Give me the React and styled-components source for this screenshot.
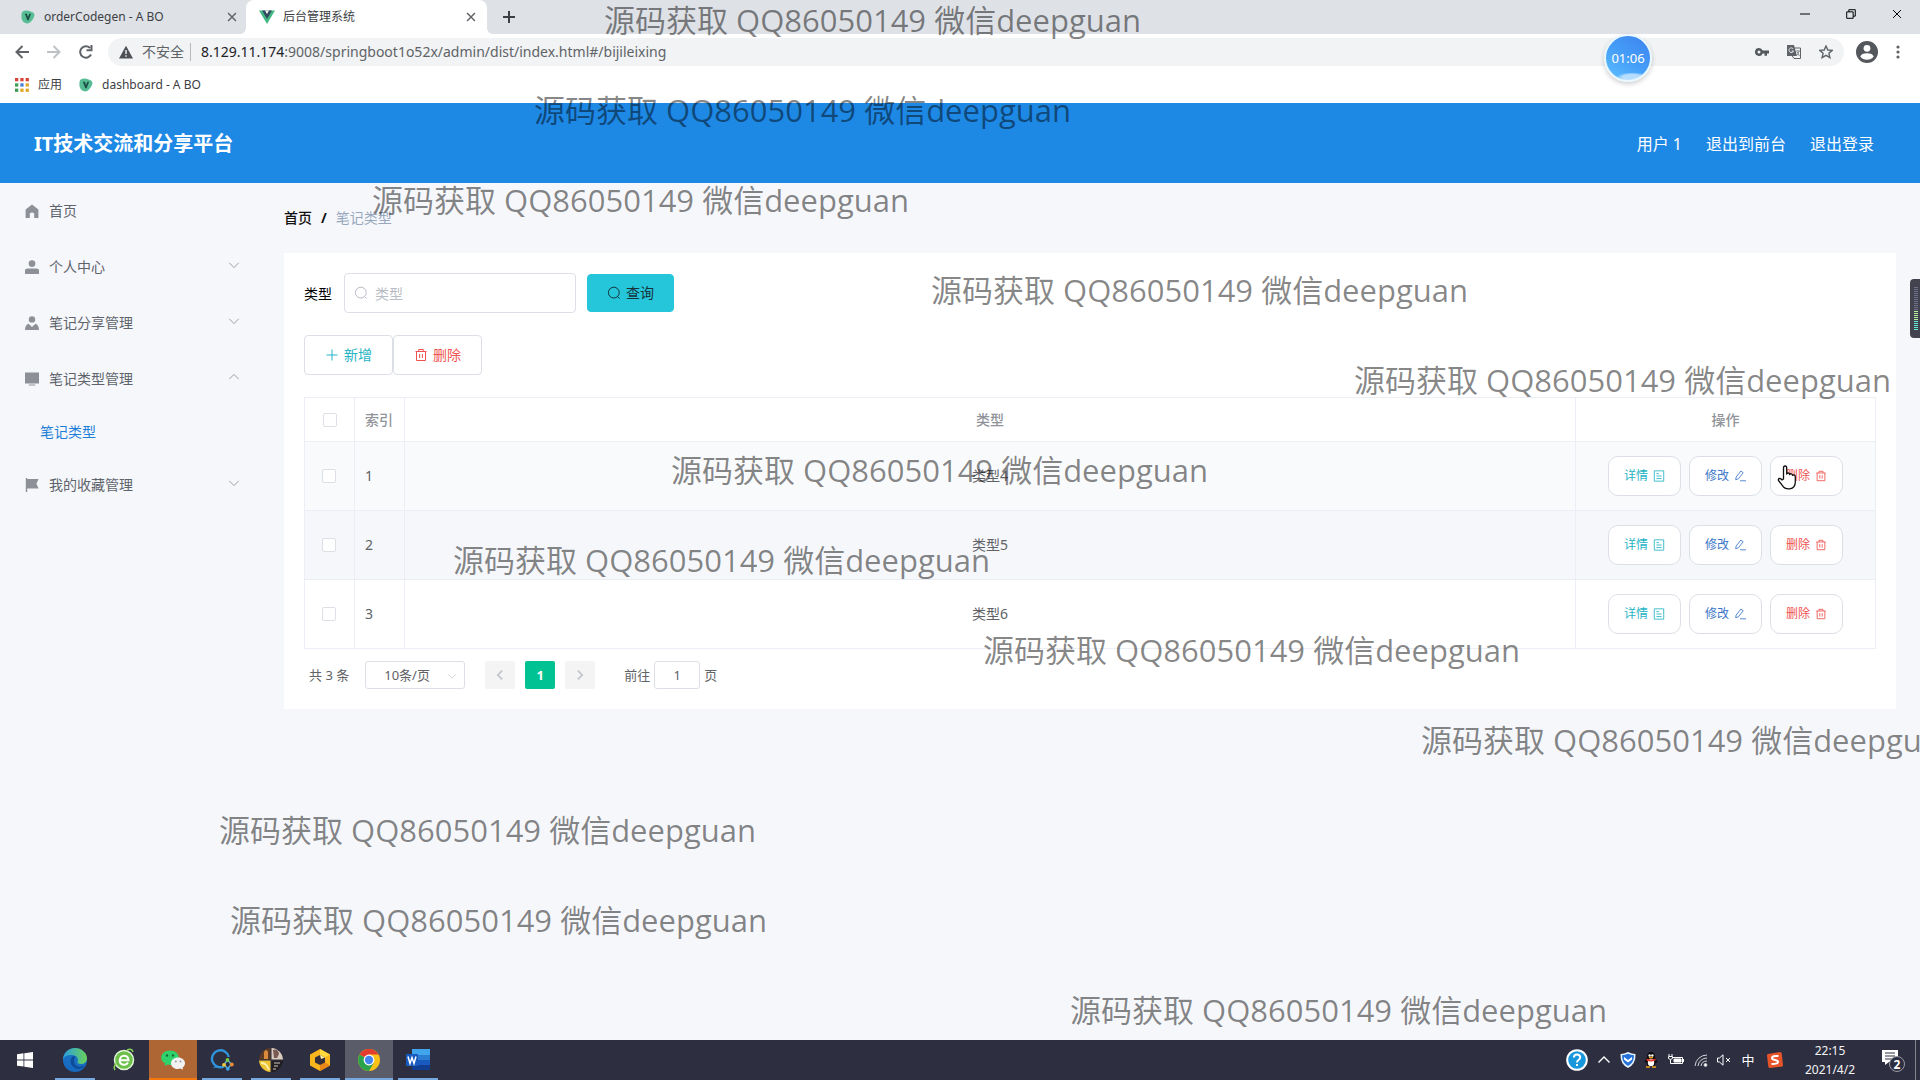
import React, { useState } from "react";
import styled, { createGlobalStyle, css } from "styled-components";

const GlobalStyle = createGlobalStyle`
  *, *::before, *::after { box-sizing: border-box; }
  body { margin: 0; overflow: hidden; }
  body, button, input, select {
    font-family: "Noto Sans", "Noto Sans CJK SC", sans-serif;
    font-size: 14px;
  }
  button { padding: 0; border: 0; background: none; color: inherit; cursor: pointer; }
  a { color: inherit; text-decoration: none; }
  svg { display: block; flex: none; }
`;

const Screen = styled.div`
  position: relative;
  display: flex;
  flex-direction: column;
  height: 100vh;
  overflow: hidden;
  background: #f6f7fb;
`;

/* ---------- browser frame ---------- */

const TabStrip = styled.div`
  display: flex;
  height: 34px;
  flex: none;
  background: #dee1e6;
  color: #3c4043;
`;

const Tab = styled.div`
  position: relative;
  display: flex;
  align-items: center;
  width: ${(p) => (p.$active ? 241 : 246)}px;
  padding: 0 ${(p) => (p.$active ? 6 : 4)}px 0 ${(p) => (p.$active ? 13 : 20)}px;
  border-radius: 8px 8px 0 0;
  background: ${(p) => (p.$active ? "#fff" : "transparent")};
  font-size: 12px;
  line-height: 20px;
  ${(p) => p.$active && css`
    &::before, &::after {
      content: "";
      position: absolute;
      bottom: 0;
      width: 6px;
      height: 6px;
    }
    &::before { right: 100%; background: radial-gradient(circle at 0 0, transparent 6px, #fff 6px); }
    &::after { left: 100%; background: radial-gradient(circle at 100% 0, transparent 6px, #fff 6px); }
  `}
`;

const TabTitle = styled.span`
  flex: 1;
  padding-left: 8px;
  white-space: nowrap;
`;

const IconButton = styled.button`
  display: grid;
  place-items: center;
  width: ${(p) => p.$w || 20}px;
  height: ${(p) => p.$h || 20}px;
  color: ${(p) => p.$color || "#5f6368"};
`;

const NewTab = styled(IconButton)`
  margin: 7px 0 0 12px;
`;

const WindowControls = styled.div`
  display: flex;
  margin-left: auto;
`;

const Toolbar = styled.div`
  display: flex;
  align-items: center;
  flex: none;
  height: 36px;
  padding: 0 2px 0 6px;
  background: #fff;
`;

const Address = styled.div`
  display: flex;
  align-items: center;
  flex: 1;
  height: 28px;
  margin: 0 12px 0 6px;
  padding: 0 8px 0 11px;
  border-radius: 14px;
  background: #f1f3f4;
  color: #5f6368;
  line-height: 20px;
`;

const Insecure = styled.span`
  padding: 0 6px 0 9px;
`;

const AddressText = styled.div`
  flex: 1;
  padding-left: 10px;
  border-left: 1px solid #b5b8bc;
  line-height: 18px;
  white-space: nowrap;
  b { font-weight: 400; color: #202124; }
`;

const AddressTools = styled.div`
  display: flex;
  gap: 12px;
`;

const Bookmarks = styled.nav`
  display: flex;
  align-items: center;
  flex: none;
  gap: 16px;
  height: 33px;
  padding: 0 14px 3px;
  background: #fff;
  color: #3c4043;
  font-size: 12px;
  line-height: 20px;
`;

const Bookmark = styled.a`
  display: flex;
  align-items: center;
  gap: 8px;
`;

/* ---------- application ---------- */

const AppHeader = styled.header`
  display: flex;
  align-items: center;
  justify-content: space-between;
  flex: none;
  height: 80px;
  padding: 2px 46px 0 34px;
  background: #1e88e5;
  color: #fff;
`;

const Brand = styled.h1`
  margin: 0;
  font-size: 20px;
  font-weight: 700;
  line-height: 30px;
`;

const UserNav = styled.nav`
  display: flex;
  gap: 24px;
  font-size: 16px;
  line-height: 24px;
`;

const Body = styled.div`
  display: flex;
  flex: 1;
  min-height: 0;
`;

const Sidebar = styled.aside`
  flex: none;
  width: 260px;
  background: #f5f7fb;
  color: #5f646c;
`;

const MenuItem = styled.button`
  display: flex;
  align-items: center;
  width: 100%;
  height: 56px;
  padding: 0 20px 0 25px;
  text-align: left;
  svg:first-child { color: #8d9096; }
`;

const MenuLabel = styled.span`
  flex: 1;
  padding: 0 0 2px 10px;
`;

const MenuArrow = styled.span`
  padding-bottom: 4px;
`;

const SubMenuItem = styled.a`
  display: flex;
  align-items: center;
  height: 50px;
  padding: 0 0 2px 40px;
  color: #1e7fd8;
`;

const Main = styled.main`
  flex: 1;
  min-width: 0;
  padding: 0 24px;
`;

const Breadcrumb = styled.nav`
  display: flex;
  align-items: center;
  gap: 9px;
  height: 70px;
  padding-bottom: 2px;
  color: #111;
  font-weight: 500;
  span:last-child { font-weight: 400; color: #97a8be; }
`;

const Card = styled.section`
  padding: 20px;
  background: #fff;
`;

const SearchForm = styled.form`
  display: flex;
  align-items: center;
  margin-bottom: 22px;
`;

const SearchBox = styled.div`
  display: flex;
  align-items: center;
  gap: 7px;
  width: 232px;
  height: 40px;
  margin: 0 11px 0 12px;
  padding: 0 9px;
  border: 1px solid #dcdfe6;
  border-radius: 4px;
  color: #b8bcc5;
  input {
    width: 100%;
    padding: 0;
    border: 0;
    outline: 0;
    background: none;
    color: #606266;
  }
  input::placeholder { color: #b8bcc5; opacity: 1; }
`;

const Button = styled.button`
  display: flex;
  align-items: center;
  justify-content: center;
  gap: 5px;
  height: 40px;
  padding: 0 20px;
  border: 1px solid #dcdfe6;
  border-radius: 4px;
  background: #fff;
  color: ${(p) => p.$color};
  line-height: 20px;
  ${(p) => p.$filled && css`
    height: 38px;
    border-color: #26c6da;
    background: #26c6da;
    padding: 0 19px;
  `}
  ${(p) => p.$small && css`
    padding: 0 15px;
    border-radius: 10px;
    font-size: 12px;
  `}
`;

const ButtonRow = styled.div`
  display: flex;
  gap: ${(p) => p.$gap || 0}px;
  justify-content: ${(p) => (p.$center ? "center" : "flex-start")};
`;

const Table = styled.table`
  width: 100%;
  margin-top: 22px;
  border: solid #ebeef5;
  border-width: 1px 0 0 1px;
  border-spacing: 0;
  table-layout: fixed;
  color: #606266;
  line-height: 20px;
  td:first-child { padding-right: 2px; }
`;

const Cell = styled.td`
  height: ${(p) => (p.as === "th" ? 44 : 69)}px;
  padding: 0 ${(p) => (p.$left ? 10 : 0)}px;
  border: solid #ebeef5;
  border-width: 0 1px 1px 0;
  color: ${(p) => (p.as === "th" ? "#909399" : "inherit")};
  font-weight: ${(p) => (p.as === "th" ? 500 : 400)};
  text-align: ${(p) => (p.$left ? "left" : "center")};
`;

const Row = styled.tr`
  background: ${(p) => p.$bg};
`;

const Checkbox = styled.input`
  display: block;
  width: 14px;
  height: 14px;
  margin: 0 auto;
  appearance: none;
  border: 1px solid #dcdfe6;
  border-radius: 2px;
  background: #fff;
  &:checked { background: #409eff; }
`;

const Pagination = styled.div`
  display: flex;
  align-items: center;
  height: 28px;
  margin-top: 12px;
  padding-left: 5px;
  color: #606266;
  font-size: 13px;
  line-height: 28px;
  white-space: nowrap;
`;

const PageSize = styled.div`
  position: relative;
  width: 100px;
  margin: 0 20px 0 16px;
  select {
    display: block;
    width: 100%;
    height: 28px;
    padding: 0 24px 0 18px;
    appearance: none;
    border: 1px solid #dcdfe6;
    border-radius: 3px;
    background: #fff;
    color: #606266;
    font-size: 13px;
  }
  svg {
    position: absolute;
    top: 10px;
    right: 8px;
    pointer-events: none;
    color: #c0c4cc;
  }
`;

const Pager = styled.div`
  display: flex;
  gap: 10px;
`;

const PageButton = styled.button`
  display: grid;
  place-items: center;
  width: 30px;
  height: 28px;
  border-radius: 2px;
  background: ${(p) => (p.$active ? "#00c292" : "#f4f4f5")};
  color: ${(p) => (p.$active ? "#fff" : "#c0c4cc")};
  font-size: 13px;
  font-weight: 700;
`;

const Jump = styled.label`
  display: flex;
  align-items: center;
  gap: 4px;
  margin-left: 29px;
  input {
    width: 46px;
    height: 28px;
    padding: 0;
    border: 1px solid #dcdfe6;
    border-radius: 3px;
    color: #606266;
    font-size: 13px;
    text-align: center;
  }
`;

/* ---------- taskbar ---------- */

const Taskbar = styled.footer`
  display: flex;
  justify-content: space-between;
  flex: none;
  height: 40px;
  background: #2d2e40;
  color: #fff;
`;

const TaskList = styled.div`
  display: flex;
  gap: 1px;
`;

const Task = styled.button`
  display: grid;
  place-items: center;
  width: ${(p) => (p.$start ? 50 : 48)}px;
  height: 40px;
  background:
    linear-gradient(${(p) => p.$line || "transparent"} 0 0) bottom / ${(p) => (p.$tile ? "100%" : "40px")} 2px no-repeat,
    ${(p) => p.$tile || "transparent"};
`;

const Tray = styled.div`
  display: flex;
  align-items: center;
`;

const TrayIcon = styled.button`
  display: grid;
  place-items: center;
  width: ${(p) => p.$w || 24}px;
  height: 40px;
  font-size: 13px;
  line-height: 20px;
`;

const Clock = styled.time`
  width: 82px;
  color: #f4f4f6;
  font-size: 12px;
  line-height: 19px;
  text-align: center;
`;

const DesktopEdge = styled.div`
  width: 5px;
  height: 40px;
  border-left: 1px solid #85868f;
`;

/* ---------- floating layers ---------- */

const TimerBubble = styled.div`
  position: absolute;
  top: 34px;
  left: 1604px;
  display: grid;
  place-items: center;
  width: 48px;
  height: 48px;
  border: 2px solid #e9f7ff;
  border-radius: 50%;
  background:
    radial-gradient(ellipse 16px 5px at 60% 94%, rgba(255, 255, 255, 0.6) 60%, transparent),
    linear-gradient(215deg, #3c82ee, #459df8 50%, #5cc0ff);
  box-shadow: 0 2px 5px rgba(0, 0, 0, 0.2);
  color: #fff;
  font-size: 13px;
`;

const Meter = styled.div`
  position: absolute;
  top: 279px;
  right: 0;
  width: 10px;
  height: 59px;
  padding: 7px 2px 7px 4px;
  border-radius: 4px 0 0 4px;
  background: #42434f;
  div {
    height: 100%;
    background:
      repeating-linear-gradient(#42434f 0 1px, transparent 1px 2px),
      linear-gradient(#6d7086 0 54%, #b4f0a0 54% 75%, #62ecd0 75%);
  }
`;

const Pointer = styled.svg`
  position: absolute;
  top: 465px;
  left: 1777px;
`;

const Watermark = styled.div`
  position: absolute;
  z-index: 5;
  color: rgba(0, 0, 0, 0.48);
  font-family: "Open Sans", "Noto Sans CJK SC", sans-serif;
  font-size: 31px;
  line-height: 40px;
  white-space: nowrap;
  pointer-events: none;
`;

/* ---------- icons ---------- */

const Line = ({ size = 14, w = 1, children, ...rest }) => (
  <svg width={size} height={size} viewBox="0 0 14 14" fill="none" stroke="currentColor" strokeWidth={w} {...rest}>
    {children}
  </svg>
);
const SearchIcon = () => <Line><circle cx="6.8" cy="6.6" r="5.4" /><path d="M10.6 10.6l2 2" /></Line>;
const PlusIcon = () => <Line><path d="M7 1.5v11M1.5 7h11" /></Line>;
const TrashIcon = ({ size }) => (
  <Line size={size}><path d="M1.5 3.5h11M2.5 3.5v9h9v-9M4.7 3.5v-2h4.6v2M5.6 6v4M8.4 6v4" /></Line>
);
const DocIcon = ({ size }) => <Line size={size}><path d="M1.5 1h11v12h-11zM4 4.2h3M4 7h6M4 10h6" /></Line>;
const EditIcon = ({ size }) => <Line size={size}><path d="M2 11.4l.5-3.2 5.6-7 2.6 2-5.5 7zM7 12.6h7" /></Line>;
const Chevron = ({ dir = "down", size = 12, w = 1 }) => (
  <Line size={size} w={w}>
    <path d={{ down: "M1.5 4.5L7 10l5.5-5.5", up: "M1.5 9.5L7 4l5.5 5.5", left: "M9.5 2L4.5 7l5 5", right: "M4.5 2l5 5-5 5" }[dir]} />
  </Line>
);
const CloseX = ({ size = 10, w = 2 }) => <Line size={size} w={w}><path d="M1.5 1.5l11 11M12.5 1.5l-11 11" /></Line>;

const MenuIcon = ({ kind }) => (
  <svg width="14" height="14" viewBox="0 0 14 14" fill="currentColor">
    {kind === "home" && <path d="M7 .5L.6 5.500V14h4.200V9.500q2.200-2 4.400 0V14h4.200V5.500z" />}
    {kind === "user" && <><circle cx="7" cy="3.6" r="3.4" /><path d="M0 14v-3q0-2.4 2.6-2.4h8.8Q14 8.600 14 11v3z" /></>}
    {kind === "custom" && <><circle cx="7" cy="3.4" r="3.2" /><path d="M0 14q0-5 3.600-6.200L7 11l3.400-3.200Q14 9 14 14z" /></>}
    {kind === "monitor" && <path d="M0 .5h14v11H0zM4 12.500h6l.6 1H3.400z" />}
    {kind === "flag" && <path d="M.8 0h1.400v14H.8zM2.200 1h11.400l-2.200 4.700 2.200 4.800H2.200z" />}
  </svg>
);

const VueTabIcon = () => (
  <svg width="16" height="16" viewBox="0 0 16 16">
    <path d="M0 1.500h16L8 15z" fill="#41b883" /><path d="M3 1.500h10L8 10z" fill="#35495e" /><path d="M6 1.500h4L8 5z" fill="#fff" />
  </svg>
);
const LeafIcon = () => (
  <svg width="16" height="16" viewBox="0 0 16 16">
    <path d="M2 3Q6 .5 10 2.200q4.500 1 4.500 4-1.500 6-6.500 8.300Q3 14.500 1.500 9.500 1 6 2 3z" fill="#56bd94" />
    <path d="M4.800 4.800h2.100L8 8l1.300-3.200h1.800L8.600 11.200H7.300z" fill="#1d5046" />
  </svg>
);
const AppsIcon = () => (
  <svg width="16" height="16" viewBox="0 0 16 16">
    {["#d8453a", "#d8453a", "#d8453a", "#3f9d58", "#4a7fd8", "#e0a92c", "#3f9d58", "#e0a92c", "#e0a92c"].map((c, i) => (
      <rect key={i} x={1 + (i % 3) * 5.300} y={1 + Math.floor(i / 3) * 5.300} width="3.300" height="3.300" fill={c} />
    ))}
  </svg>
);

const taskIcons = {
  windows: <svg width="16" height="16" viewBox="0 0 16 16" fill="#fff"><path d="M0 2.200L6.500 1.300v6.200H0zM7.300 1.200L16 0v7.500H7.300zM0 8.400h6.500v6.200L0 13.700zM7.300 8.400H16V16l-8.700-1.200z" /></svg>,
  edge: (
    <svg width="24" height="24" viewBox="0 0 24 24">
      <defs>
        <linearGradient id="edgeTop"><stop offset="0" stopColor="#2a9fe0" /><stop offset="1" stopColor="#6ad15a" /></linearGradient>
        <linearGradient id="edgeLow" x2="0" y2="1"><stop offset="0" stopColor="#1b76c9" /><stop offset="1" stopColor="#1667bd" /></linearGradient>
      </defs>
      <circle cx="12" cy="12" r="12" fill="url(#edgeLow)" />
      <path d="M0 12C0 5 5.500 0 12 0s12 5 12 10c0 4-3 6-6 6-2.500 0-4-1-3.500-2 1-2 .5-4.500-2-6C9 6 1 6.500 0 12z" fill="url(#edgeTop)" />
      <path d="M9 9c-3 3.500-1 9.500 4 11.500 3.500 1 7 0 9-3-4 2-9 1.500-10.500-2C10.500 13 11 10 12.500 8.500 11 8 10 8 9 9z" fill="#0f4c98" />
    </svg>
  ),
  green: (
    <svg width="24" height="24" viewBox="0 0 24 24" fill="none">
      <circle cx="12" cy="12" r="9.500" fill="#6cc04a" stroke="#e2f5d8" strokeWidth="1.500" />
      <path d="M7.500 12.200h9c0-6-8.800-6-8.800.3 0 5 6.500 5.500 8.300 2" stroke="#fff" strokeWidth="2" />
      <path d="M3 22Q1 19 4.500 15M15 2q5-2 6 2" stroke="#86d256" strokeWidth="1.500" />
    </svg>
  ),
  wechat: (
    <svg width="24" height="24" viewBox="0 0 24 24">
      <path d="M9 2.500c5 0 8.800 3.200 8.800 7.200S14 17 9 17l-2.500-.4L3.500 18l.6-2.700C1.500 14 .2 12 .2 9.700.2 5.700 4 2.500 9 2.500z" fill="#2fd36b" />
      <circle cx="6" cy="7.500" r="1.200" fill="#186b37" /><circle cx="12" cy="7.500" r="1.200" fill="#186b37" />
      <path d="M17 9.500c4 0 7 2.500 7 5.700 0 1.800-1 3.400-2.400 4.400l.4 2.200-2.500-1.200C14 22 10 19 10 15.200c0-3.200 3-5.700 7-5.700z" fill="#f2f2f2" />
      <circle cx="14.800" cy="13.500" r="1" fill="#9c9c9c" /><circle cx="19.500" cy="13.500" r="1" fill="#9c9c9c" />
    </svg>
  ),
  search: (
    <svg width="24" height="24" viewBox="0 0 24 24" fill="none">
      <path d="M14 18.500A8.500 8.500 0 1 1 18.800 9" stroke="#2e95dc" strokeWidth="2.400" /><path d="M3 20l3-3 4 2z" fill="#2e95dc" />
      <path d="M17.500 12l4 4.500-4 4-3.500-4z" stroke="#5ab0d8" strokeWidth="1.500" />
      <circle cx="17.500" cy="12" r="1.900" fill="#7ac943" /><circle cx="21.800" cy="16.500" r="1.900" fill="#ef8a30" /><circle cx="14" cy="16.800" r="1.900" fill="#f4c430" /><circle cx="17.800" cy="20.800" r="1.900" fill="#3aa0e8" />
    </svg>
  ),
  collage: (
    <svg width="24" height="24" viewBox="0 0 24 24">
      <path d="M11.500 0v11.500H0C.5 5 5 .5 11.500 0z" fill="#5b3b26" /><path d="M12.500 0v11.500H24C23.500 5 19 .5 12.500 0z" fill="#d9cbbf" />
      <path d="M0 12.500h11.500V24C5 23.500.5 19 0 12.500z" fill="#edc434" /><path d="M24 12.500H12.500V24C19 23.500 23.500 19 24 12.500z" fill="#221e22" />
      <path d="M5 11V4q2-4 4 0v7z" fill="#d98a3a" /><path d="M14 2q5-2 6 4l-2 4h-3z" fill="#7a5a52" />
      <path d="M2 15q5-1 8 7" stroke="#fbf0a8" strokeWidth="2" fill="none" /><path d="M15 15h6M15 18h4M14 21h3" stroke="#cfc4bc" strokeWidth="1" />
    </svg>
  ),
  hexagon: (
    <svg width="24" height="24" viewBox="0 0 24 24">
      <path d="M12 1l10 5.500v11L12 23 2 17.500v-11z" fill="#f8b51c" /><path d="M12 1l10 5.500-5 3L12 7z" fill="#ffd83c" /><path d="M12 23l10-5.500-5-3L12 17z" fill="#e9861a" />
      <path d="M12 7l5 2.500v5L12 17l-5-2.500v-5z" fill="#332e3c" /><path d="M12 7l5 2.500-4 1.500z" fill="#fff0a0" />
    </svg>
  ),
  chrome: (
    <svg width="24" height="24" viewBox="0 0 24 24">
      <circle cx="12" cy="12" r="11" fill="#fbc116" /><path d="M12 12L2.500 6.500A11 11 0 0 1 21.500 6.500H12z" fill="#e33b2e" />
      <path d="M2.500 6.500A11 11 0 0 0 12 23l4.800-8.200L12 12z" fill="#2ba24c" /><circle cx="12" cy="12" r="5.400" fill="#fff" /><circle cx="12" cy="12" r="4.200" fill="#4586ee" />
    </svg>
  ),
  word: (
    <svg width="24" height="24" viewBox="0 0 24 24">
      <path d="M6 1h18v6H6z" fill="#41a5ee" /><path d="M6 7h18v5H6z" fill="#2b7cd3" /><path d="M6 12h18v5H6z" fill="#185abd" /><path d="M6 17h18v5H6z" fill="#103f91" />
      <path d="M0 6h12v12H0z" fill="#185abd" /><path d="M2 8.500L4 15.500 6 9.500 8 15.500 10 8.500" fill="none" stroke="#fff" strokeWidth="1.500" />
    </svg>
  ),
};

/* ---------- data ---------- */

const menu = [
  { icon: "home", label: "首页" },
  { icon: "user", label: "个人中心", arrow: "down" },
  { icon: "custom", label: "笔记分享管理", arrow: "down" },
  { icon: "monitor", label: "笔记类型管理", arrow: "up", child: "笔记类型" },
  { icon: "flag", label: "我的收藏管理", arrow: "down" },
];

const rows = [
  { id: 1, type: "类型4", bg: "#f9fafc" },
  { id: 2, type: "类型5", bg: "#f5f7fa" },
  { id: 3, type: "类型6", bg: "#fff" },
];

const blue = "#76a9e0";
const tasks = [
  { icon: "windows", label: "开始", start: true },
  { icon: "edge", label: "Edge", line: blue },
  { icon: "green", label: "浏览器" },
  { icon: "wechat", label: "微信", line: "#f5760c", tile: "#ae6634" },
  { icon: "search", label: "搜索", line: blue },
  { icon: "collage", label: "图片", line: blue },
  { icon: "hexagon", label: "工具", line: blue },
  { icon: "chrome", label: "Chrome", line: blue, tile: "#5b5c6a" },
  { icon: "word", label: "Word", line: blue },
];

const marks = [
  [604, 0], [534, 90], [372, 180], [931, 270], [1354, 360], [671, 450],
  [453, 540], [983, 630], [1421, 720], [219, 810], [230, 900], [1070, 990],
];

/* ---------- page ---------- */

function BrowserFrame() {
  return (
    <>
      <TabStrip>
        <Tab>
          <LeafIcon /><TabTitle>orderCodegen - A BO</TabTitle>
          <IconButton aria-label="关闭标签页"><CloseX /></IconButton>
        </Tab>
        <Tab $active>
          <VueTabIcon /><TabTitle>后台管理系统</TabTitle>
          <IconButton aria-label="关闭标签页"><CloseX /></IconButton>
        </Tab>
        <NewTab aria-label="新标签页" $color="#3c4043"><Line size={14} w={2}><path d="M7 1v12M1 7h12" /></Line></NewTab>
        <WindowControls>
          <IconButton aria-label="最小化" $w={46} $h={28} $color="#000"><Line size={10} w={1.4}><path d="M0 7h14" /></Line></IconButton>
          <IconButton aria-label="还原" $w={46} $h={28} $color="#000"><Line size={10} w={1.4}><path d="M1 4h9v9H1zM4 4V1h9v9h-3" /></Line></IconButton>
          <IconButton aria-label="关闭" $w={46} $h={28} $color="#000"><CloseX w={1.4} /></IconButton>
        </WindowControls>
      </TabStrip>
      <Toolbar>
        <IconButton aria-label="后退" $w={32}><Line size={14} w={2}><path d="M14 7H1.500M7.500 1L1.500 7l6 6" /></Line></IconButton>
        <IconButton aria-label="前进" $w={32} $color="#bfc2c5"><Line size={14} w={2}><path d="M0 7h12.500M6.500 1l6 6-6 6" /></Line></IconButton>
        <IconButton aria-label="刷新" $w={32}><Line size={14} w={2}><path d="M12 9.500A5.700 5.700 0 1 1 11 3M12.500 0v5.200H7.500" /></Line></IconButton>
        <Address>
          <svg width="14" height="14" viewBox="0 0 14 14"><path d="M7 .8L14 13.500H0z" fill="#4d5156" /><path d="M6.300 5h1.400v4H6.300zM6.300 10.200h1.400v1.500H6.300z" fill="#f1f3f4" /></svg>
          <Insecure>不安全</Insecure>
          <AddressText role="textbox" aria-label="地址"><b>8.129.11.174</b>:9008/springboot1o52x/admin/dist/index.html#/bijileixing</AddressText>
          <AddressTools>
            <IconButton aria-label="密码">
              <svg width="14" height="14" viewBox="0 0 14 14" fill="#54575b"><path fillRule="evenodd" d="M4 3a4 4 0 1 0 3.700 5.500H9.500v2.300H12V8.500h2v-3H7.700A4 4 0 0 0 4 3zm0 2.500a1.500 1.500 0 1 1 0 3 1.500 1.500 0 0 1 0-3z" /></svg>
            </IconButton>
            <IconButton aria-label="翻译">
              <svg width="14" height="14" viewBox="0 0 14 14" fill="none"><path d="M5.500 3h8v10.500H7L5 10.500" stroke="#5f6368" /><path d="M0 0h7l3 11H0z" fill="#5f6368" /><path d="M6.300 4A2.300 2.300 0 1 0 6.500 6H4.700" stroke="#e8eaed" /><path d="M9 6h4M11 5v1M12 6q-.5 3-2 4M10 7l2.500 4" stroke="#8a8d91" /></svg>
            </IconButton>
            <IconButton aria-label="收藏"><Line size={14} w={1.4}><path d="M7 1l1.800 4 4.400.4-3.300 2.900 1 4.300L7 10.300l-3.900 2.300 1-4.300L.8 5.400 5.200 5z" /></Line></IconButton>
          </AddressTools>
        </Address>
        <IconButton aria-label="用户" $w={22} $h={22}>
          <svg width="22" height="22" viewBox="0 0 22 22"><circle cx="11" cy="11" r="11" fill="#54575b" /><circle cx="11" cy="7.300" r="3.400" fill="#fff" /><path d="M4.300 15.600q1-3.400 6.700-3.400t6.700 3.400q-2.500 3.200-6.700 3.200t-6.700-3.200z" fill="#fff" /></svg>
        </IconButton>
        <IconButton aria-label="菜单" $w={40}>
          <svg width="4" height="14" viewBox="0 0 4 14" fill="#5f6368"><circle cx="2" cy="2" r="1.600" /><circle cx="2" cy="7" r="1.600" /><circle cx="2" cy="12" r="1.600" /></svg>
        </IconButton>
      </Toolbar>
      <Bookmarks>
        <Bookmark href="#apps"><AppsIcon />应用</Bookmark>
        <Bookmark href="#dashboard"><LeafIcon />dashboard - A BO</Bookmark>
      </Bookmarks>
    </>
  );
}

function NoteTable() {
  return (
    <Table>
      <colgroup>
        <col style={{ width: 50 }} /><col style={{ width: 50 }} /><col /><col style={{ width: 300 }} />
      </colgroup>
      <thead>
        <tr>
          <Cell as="th"><Checkbox type="checkbox" aria-label="全选" /></Cell>
          <Cell as="th" $left>索引</Cell>
          <Cell as="th">类型</Cell>
          <Cell as="th">操作</Cell>
        </tr>
      </thead>
      <tbody>
        {rows.map((r) => (
          <Row key={r.id} $bg={r.bg}>
            <Cell><Checkbox type="checkbox" aria-label={r.type} /></Cell>
            <Cell $left>{r.id}</Cell>
            <Cell>{r.type}</Cell>
            <Cell>
              <ButtonRow $gap={8} $center>
                <Button $small $color="#26b3c4">详情<DocIcon size={12} /></Button>
                <Button $small $color="#3c76c8">修改<EditIcon size={12} /></Button>
                <Button $small $color="#ef5350">删除<TrashIcon size={12} /></Button>
              </ButtonRow>
            </Cell>
          </Row>
        ))}
      </tbody>
    </Table>
  );
}

function Pages() {
  const [page, setPage] = useState("1");
  return (
    <Pagination>
      <span>共 3 条</span>
      <PageSize>
        <select aria-label="每页条数"><option>10条/页</option><option>20条/页</option></select>
        <Chevron size={10} />
      </PageSize>
      <Pager>
        <PageButton aria-label="上一页"><Chevron dir="left" w={2} /></PageButton>
        <PageButton $active>1</PageButton>
        <PageButton aria-label="下一页"><Chevron dir="right" w={2} /></PageButton>
      </Pager>
      <Jump>前往<input value={page} onChange={(e) => setPage(e.target.value)} />页</Jump>
    </Pagination>
  );
}

function SystemTray() {
  return (
    <Tray>
      <TrayIcon $w={28} aria-label="帮助">
        <svg width="22" height="22" viewBox="0 0 22 22" fill="none"><circle cx="11" cy="11" r="9.800" fill="#1997dc" stroke="#fff" strokeWidth="2" /><path d="M7.800 8.500Q8 5.500 11 5.500t3.200 2.700Q14.200 10 12.500 11 11 12 11 13.500M11 15v2" stroke="#fff" strokeWidth="2" /></svg>
      </TrayIcon>
      <TrayIcon $w={26} aria-label="展开"><Chevron dir="up" size={14} w={1.4} /></TrayIcon>
      <TrayIcon $w={22} aria-label="安全">
        <svg width="16" height="16" viewBox="0 0 16 16"><path d="M8 0q4 2 7.500 2Q16 12 8 16 0 12 .5 2 4 2 8 0z" fill="#e8f2ff" /><path d="M8 1.800q3 1.300 6 1.500Q14 11 8 14 2 11 2 3.300q3-.2 6-1.500z" fill="#2573d9" /><path d="M4 5l4 3 4-3v2.500l-4 3-4-3z" fill="#fff" /></svg>
      </TrayIcon>
      <TrayIcon aria-label="QQ">
        <svg width="16" height="16" viewBox="0 0 16 16"><path d="M8 0q4 0 4 5l2.500 5-2 1Q12 15 8 15t-4.500-4l-2-1L4 5q0-5 4-5z" fill="#0c0c0e" /><ellipse cx="8" cy="10.500" rx="3.200" ry="3.800" fill="#fff" /><path d="M3.500 6.500q4.500 2 9 0v2q-4.500 2-9 0z" fill="#e13a2c" /><circle cx="6.600" cy="3.500" r="1.200" fill="#fff" /><circle cx="9.400" cy="3.500" r="1.200" fill="#fff" /><path d="M6 5.500h4M3 15h4M9 15h4" stroke="#f4a41c" strokeWidth="1.500" /></svg>
      </TrayIcon>
      <TrayIcon $w={26} aria-label="电池">
        <svg width="16" height="14" viewBox="0 0 16 14" fill="none" stroke="#fff"><path d="M1 1v2M4 1v2M.5 3.500h4v2l-2 1-2-1zM2.500 6.500v4H5M5 4.500h9.500v6H5M15.500 6v3" /><path d="M6 6h7v3H6z" fill="#fff" /></svg>
      </TrayIcon>
      <TrayIcon aria-label="网络">
        <svg width="14" height="14" viewBox="0 0 14 14" fill="none" stroke="#d5d5da"><path d="M1 13A12 12 0 0 1 13 2M4 13a9 9 0 0 1 9-8M7 13a6 6 0 0 1 6-5" /><circle cx="11.500" cy="12" r="1.400" fill="#fff" /></svg>
      </TrayIcon>
      <TrayIcon $w={22} aria-label="音量">
        <svg width="14" height="12" viewBox="0 0 14 12" fill="none" stroke="#fff"><path d="M.5 4h2L6 .8v10.400L2.500 8h-2zM9 4l4 4M13 4L9 8" /></svg>
      </TrayIcon>
      <TrayIcon $w={26} aria-label="输入法">中</TrayIcon>
      <TrayIcon $w={28} aria-label="搜狗">
        <svg width="16" height="16" viewBox="0 0 16 16"><path d="M1 2l12-2q1.500 0 1.700 1.500L16 13q0 1.500-1.500 1.700L3 16q-1.500 0-1.700-1.500L0 3.500Q0 2.200 1 2z" fill="#e8542a" /><path d="M11.500 4Q5 3.500 5 6q0 1.500 3 2t3 2q0 2-6.500 2" fill="none" stroke="#fff" strokeWidth="2" /></svg>
      </TrayIcon>
      <Clock>22:15<br />2021/4/2</Clock>
      <TrayIcon $w={44} aria-label="通知">
        <svg width="26" height="26" viewBox="0 0 26 26"><path d="M2 3h16v12H9l-4 3v-3H2z" fill="#fff" /><path d="M5 6h10M5 9h10M5 12h7" stroke="#2d2e40" /><circle cx="17" cy="17" r="7.500" fill="#2d2e40" stroke="#9a9ba4" /><text x="17" y="21.500" textAnchor="middle" fontSize="12" fontWeight="700" fill="#fff">2</text></svg>
      </TrayIcon>
      <DesktopEdge />
    </Tray>
  );
}

export default function App() {
  return (
    <Screen>
      <GlobalStyle />
      <BrowserFrame />
      <AppHeader>
        <Brand>IT技术交流和分享平台</Brand>
        <UserNav><span>用户 1</span><a href="#front">退出到前台</a><a href="#logout">退出登录</a></UserNav>
      </AppHeader>
      <Body>
        <Sidebar>
          {menu.map((m) => (
            <React.Fragment key={m.label}>
              <MenuItem>
                <MenuIcon kind={m.icon} /><MenuLabel>{m.label}</MenuLabel>
                {m.arrow && <MenuArrow><Chevron dir={m.arrow} /></MenuArrow>}
              </MenuItem>
              {m.child && <SubMenuItem href="#bijileixing">{m.child}</SubMenuItem>}
            </React.Fragment>
          ))}
        </Sidebar>
        <Main>
          <Breadcrumb><a href="#home">首页</a><b>/</b><span>笔记类型</span></Breadcrumb>
          <Card>
            <SearchForm onSubmit={(e) => e.preventDefault()}>
              <label htmlFor="type">类型</label>
              <SearchBox><SearchIcon /><input id="type" placeholder="类型" /></SearchBox>
              <Button $filled $color="#16323a"><SearchIcon />查询</Button>
            </SearchForm>
            <ButtonRow>
              <Button $color="#26b3c4"><PlusIcon />新增</Button>
              <Button $color="#ef5350"><TrashIcon />删除</Button>
            </ButtonRow>
            <NoteTable />
            <Pages />
          </Card>
        </Main>
      </Body>
      <Taskbar>
        <TaskList>
          {tasks.map((t) => (
            <Task key={t.icon} aria-label={t.label} $start={t.start} $line={t.line} $tile={t.tile}>{taskIcons[t.icon]}</Task>
          ))}
        </TaskList>
        <SystemTray />
      </Taskbar>
      <TimerBubble>01:06</TimerBubble>
      <Meter><div /></Meter>
      <Pointer width="20" height="26" viewBox="0 0 20 26" fill="#fff" stroke="#111" strokeWidth="1.300" strokeLinejoin="round">
        <path d="M6.500 14V3q0-2 1.600-2t1.600 2v6q.3-1 1.500-1t1.500 1.500q.4-.9 1.500-.7t1.400 1.500q.5-.6 1.400-.4 1.300.3 1.300 2v5q0 6-5.500 7-5 .5-7.500-3.500L1.500 15.500q-.5-1.800 1-2T5 15z" />
      </Pointer>
      {marks.map(([left, top]) => (
        <Watermark key={top} style={{ left, top }}>源码获取 QQ86050149 微信deepguan</Watermark>
      ))}
    </Screen>
  );
}
